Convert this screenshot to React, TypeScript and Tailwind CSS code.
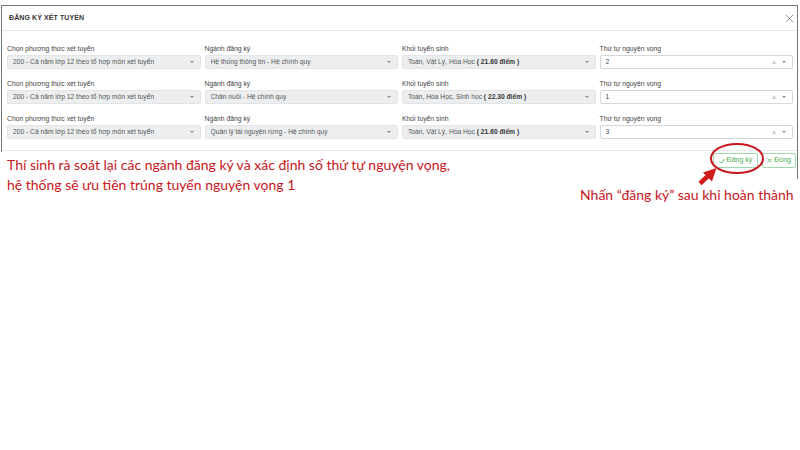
import React from "react";

type Row = { khoi: string; diem: string; nganh: string; tt: string };

const rows: Row[] = [
  { nganh: "Hệ thống thông tin - Hệ chính quy", khoi: "Toán, Vật Lý, Hóa Học", diem: "( 21.60 điểm )", tt: "2" },
  { nganh: "Chăn nuôi - Hệ chính quy", khoi: "Toán, Hóa Học, Sinh học", diem: "( 22.30 điểm )", tt: "1" },
  { nganh: "Quản lý tài nguyên rừng - Hệ chính quy", khoi: "Toán, Vật Lý, Hóa Học", diem: "( 21.60 điểm )", tt: "3" },
];

function Caret() {
  return <span className="inline-block w-0 h-0 border-l-[2px] border-r-[2px] border-t-[2px] border-l-transparent border-r-transparent border-t-[#8a8a8a]" />;
}

function Field({ label, children, disabled, clear }: { label: string; children: React.ReactNode; disabled?: boolean; clear?: boolean }) {
  return (
    <div className="flex flex-col">
      <div className="h-[9px] leading-[9px] text-[6.8px] text-[#444] mb-[2px]">{label}</div>
      <div
        className={
          disabled
            ? "h-[14px] flex items-center pl-[5px] pr-[6px] rounded-[2px] border border-[#e2e4e6] bg-[#eceeef] text-[6.7px] text-[#555]"
            : "h-[14px] flex items-center pl-[5px] pr-[6px] rounded-[2px] border border-[#d6d6d6] bg-white text-[6.7px] text-[#444]"
        }
      >
        <span className="flex-1 whitespace-nowrap overflow-hidden">{children}</span>
        {clear && <span className="text-[#a0a0a0] text-[7px] mr-[6px] leading-none">×</span>}
        <Caret />
      </div>
    </div>
  );
}

export default function App() {
  return (
    <div className="relative w-[800px] h-[450px] bg-white overflow-hidden" style={{ fontFamily: '"Liberation Sans", Arial, sans-serif' }}>
      <div className="pt-[5px] pl-[1px] pr-[2px]">
        <div className="border-t border-l border-r border-[#6f7a76] bg-white">
          {/* Header */}
          <div className="h-[25px] flex items-center justify-between pl-[7px] pr-[3px] border-b border-[#e8e8e8]">
            <span className="text-[7px] font-bold text-[#333] tracking-[0.1px] mt-[1px]">ĐĂNG KÝ XÉT TUYỂN</span>
            <svg width="9" height="9" viewBox="0 0 10 10">
              <path d="M1 1 L9 9 M9 1 L1 9" stroke="#777" strokeWidth="0.9" fill="none" />
            </svg>
          </div>
          {/* Body */}
          <div className="pt-[13px] pb-[11px] pl-[5px] pr-[4px] flex flex-col gap-[10px] border-b border-[#eaeaea]">
            {rows.map((r, i) => (
              <div key={i} className="grid grid-cols-4 gap-x-[4px]">
                <Field label="Chọn phương thức xét tuyển" disabled>
                  200 - Cả năm lớp 12 theo tổ hợp môn xét tuyển
                </Field>
                <Field label="Ngành đăng ký" disabled>
                  {r.nganh}
                </Field>
                <Field label="Khối tuyển sinh" disabled>
                  {r.khoi} <b className="font-bold text-[#333]">{r.diem}</b>
                </Field>
                <Field label="Thứ tự nguyện vọng" clear>
                  {r.tt}
                </Field>
              </div>
            ))}
          </div>
          {/* Footer */}
          <div className="h-[28px] flex items-start justify-end gap-[4px] pt-[2px] pr-[1px]">
            <button className="h-[15px] px-[5px] flex items-center gap-[2px] border border-[#9fd8ab] rounded-[2px] bg-white text-[7px] text-[#4cae4c]">
              <svg width="6" height="6" viewBox="0 0 10 10"><path d="M1 5.5 L4 8.5 L9 2" stroke="#4cae4c" strokeWidth="1.6" fill="none" /></svg>
              Đăng ký
            </button>
            <button className="h-[15px] px-[4px] flex items-center gap-[2px] border border-[#9fd8ab] rounded-[2px] bg-white text-[7px] text-[#4cae4c]">
              <svg width="5" height="5" viewBox="0 0 10 10"><path d="M1 1 L9 9 M9 1 L1 9" stroke="#4cae4c" strokeWidth="1.8" fill="none" /></svg>
              Đóng
            </button>
          </div>
        </div>
      </div>

      {/* Annotations */}
      <div
        className="absolute left-0 top-[152px] w-[470px] bg-white pl-[7px] pt-[3px] pb-[6px] text-[14px] leading-[20px] text-[#c8161d]"
        style={{ fontFamily: 'Lato, "Open Sans", sans-serif' }}
      >
        <div>Thí sinh rà soát lại các ngành đăng ký và xác định số thứ tự nguyện vọng,</div>
        <div>hệ thống sẽ ưu tiên trúng tuyển nguyện vọng 1</div>
      </div>
      <div
        className="absolute left-[580px] top-[185px] text-[14px] leading-[20px] text-[#c8161d] whitespace-nowrap"
        style={{ fontFamily: 'Lato, "Open Sans", sans-serif' }}
      >
        Nhấn “đăng ký” sau khi hoàn thành
      </div>
      <svg className="absolute left-0 top-0 pointer-events-none" width="800" height="450">
        <ellipse cx="737" cy="158.5" rx="26" ry="14.5" fill="none" stroke="#c8161d" strokeWidth="2" />
        <path d="M700 183.5 L708 176" stroke="#d11a1a" strokeWidth="4.5" strokeLinecap="butt" />
        <path d="M716.5 168 L703 172.5 L712 181.5 Z" fill="#d11a1a" />
      </svg>
    </div>
  );
}
